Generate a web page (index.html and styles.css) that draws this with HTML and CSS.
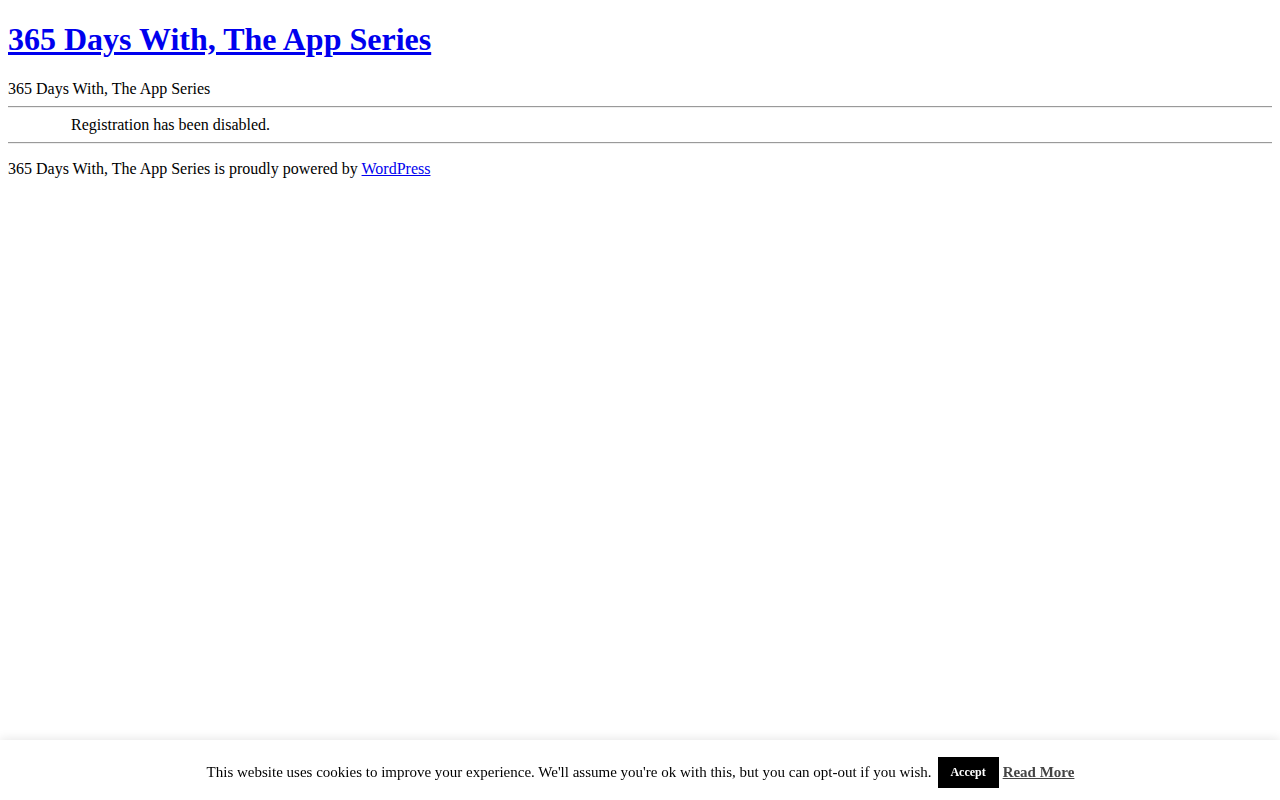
FILE: index.html
```html
<!DOCTYPE html>
<html>
<head>
<meta charset="utf-8">
<title>365 Days With, The App Series</title>
<link rel="stylesheet" href="styles.css">
</head>
<body>
<h1 class="site-title"><a href="#">365 Days With, The App Series</a></h1>
<div class="site-desc">365 Days With, The App Series</div>
<hr class="rule">
<div class="notice">Registration has been disabled.</div>
<hr class="rule">
<p class="footer">365 Days With, The App Series is proudly powered by <a href="#">WordPress</a></p>
<div class="cookie-bar">
  <span class="cookie-text">This website uses cookies to improve your experience. We'll assume you're ok with this, but you can opt-out if you wish.</span>
  <a class="cookie-accept" href="#">Accept</a>
  <a class="cookie-more" href="#">Read More</a>
</div>
</body>
</html>
```

FILE: styles.css
```css
body {
  margin: 8px;
  font-family: "Liberation Serif", "Times New Roman", serif;
  font-size: 16px;
  color: #000;
  background: #fff;
}
.site-title {
  font-size: 32px;
  margin: 13.44px 0 21.44px 0;
}
.site-title a, .footer a {
  color: #0000ee;
}
.rule {
  margin: 8px 0;
  border-style: solid;
  border-width: 1px 0 1px 0;
  border-top-color: #9a9a9a;
  border-bottom-color: #eee;
  height: 0;
}
.notice {
  padding-left: 63px;
}
.footer {
  margin: 16px 0;
}
.cookie-bar {
  position: fixed;
  left: 0;
  right: 0;
  bottom: 0;
  height: 60px;
  box-sizing: border-box;
  background: #fff;
  box-shadow: 0 -1px 10px 0 rgba(0, 0, 0, 0.1);
  display: flex;
  align-items: center;
  justify-content: center;
  padding-top: 5px;
  padding-left: 1px;
  font-size: 15px;
}
.cookie-text {
  font-family: "Liberation Serif", serif;
  font-size: 15px;
}
.cookie-accept {
  background: #000;
  color: #fff;
  font-weight: bold;
  font-size: 12px;
  text-decoration: none;
  width: 61px;
  height: 31px;
  display: flex;
  align-items: center;
  justify-content: center;
  margin-left: 6px;
}
.cookie-more {
  color: #444;
  font-weight: bold;
  font-size: 15px;
  margin-left: 4px;
}
```
